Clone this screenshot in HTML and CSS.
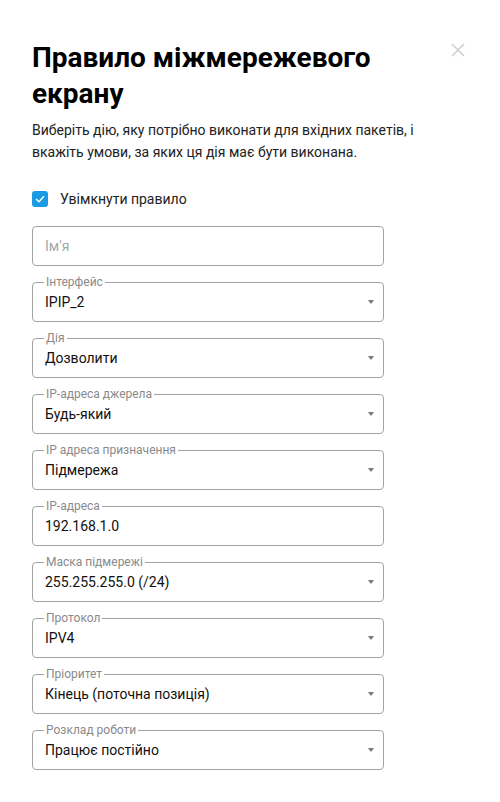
FILE: index.html
```html
<!DOCTYPE html>
<html lang="uk">
<head>
  <meta charset="UTF-8">
  <meta name="viewport" content="width=device-width, initial-scale=1">
  <title>Правило міжмережевого екрану</title>
  <link rel="stylesheet" href="styles.css">
</head>
<body>

  <!-- DIALOG -->
  <div class="dialog">
    <button class="close-btn" aria-label="Закрити">
      <svg width="14" height="14" viewBox="0 0 14 14">
        <path d="M1 1 L13 13 M13 1 L1 13" stroke="#cfcfcf" stroke-width="1.6" fill="none"/>
      </svg>
    </button>

    <h1 class="title">Правило міжмережевого екрану</h1>
    <p class="subtitle">Виберіть дію, яку потрібно виконати для вхідних пакетів, і вкажіть умови, за яких ця дія має бути виконана.</p>

    <label class="check-row">
      <span class="check-box">
        <svg width="10" height="8" viewBox="0 0 10 8">
          <path d="M1 4 L4 6.8 L9 1.2" stroke="#fff" stroke-width="1.4" fill="none"/>
        </svg>
      </span>
      Увімкнути правило
    </label>

    <!-- FORM -->
    <div class="form">
      <div class="field">
        <span class="placeholder">Ім'я</span>
      </div>

      <div class="field select">
        <span class="field-label">Інтерфейс</span>
        <span class="value">IPIP_2</span>
        <span class="arrow"></span>
      </div>

      <div class="field select">
        <span class="field-label">Дія</span>
        <span class="value">Дозволити</span>
        <span class="arrow"></span>
      </div>

      <div class="field select">
        <span class="field-label">IP-адреса джерела</span>
        <span class="value">Будь-який</span>
        <span class="arrow"></span>
      </div>

      <div class="field select">
        <span class="field-label">IP адреса призначення</span>
        <span class="value">Підмережа</span>
        <span class="arrow"></span>
      </div>

      <div class="field">
        <span class="field-label">IP-адреса</span>
        <span class="value">192.168.1.0</span>
      </div>

      <div class="field select">
        <span class="field-label">Маска підмережі</span>
        <span class="value">255.255.255.0 (/24)</span>
        <span class="arrow"></span>
      </div>

      <div class="field select">
        <span class="field-label">Протокол</span>
        <span class="value">IPV4</span>
        <span class="arrow"></span>
      </div>

      <div class="field select">
        <span class="field-label">Пріоритет</span>
        <span class="value">Кінець (поточна позиція)</span>
        <span class="arrow"></span>
      </div>

      <div class="field select">
        <span class="field-label">Розклад роботи</span>
        <span class="value">Працює постійно</span>
        <span class="arrow"></span>
      </div>
    </div>
  </div>

</body>
</html>
```

FILE: styles.css
```css
/* RESET */
* {
  margin: 0;
  padding: 0;
  box-sizing: border-box;
}

body, html {
  font-family: Roboto, "Liberation Sans", Arial, sans-serif;
  color: #1c1c1c;
  background-color: #fff;
}

/* DIALOG */
.dialog {
  position: relative;
  width: 500px;
  padding: 40px 116px 40px 32px;
}

.close-btn {
  position: absolute;
  top: 43px;
  left: 451px;
  background: none;
  border: none;
  cursor: pointer;
  line-height: 0;
}

.title {
  font-size: 28px;
  line-height: 36px;
  font-weight: 700;
  color: #000;
  margin-right: -40px;
}

.subtitle {
  margin-top: 7px;
  font-size: 14px;
  line-height: 22px;
  color: #222;
  margin-right: -60px;
}

/* CHECKBOX */
.check-row {
  display: flex;
  align-items: center;
  gap: 12px;
  margin-top: 28px;
  font-size: 14px;
  line-height: 16px;
  color: #222;
  cursor: pointer;
}

.check-box {
  width: 16px;
  height: 16px;
  border-radius: 3px;
  background-color: #1b9be4;
  display: flex;
  align-items: center;
  justify-content: center;
}

/* FORM */
.form {
  display: flex;
  flex-direction: column;
  gap: 16px;
  margin-top: 19px;
}

.field {
  position: relative;
  height: 40px;
  border: 1px solid #a3a3a3;
  border-radius: 4px;
  display: flex;
  align-items: center;
  padding: 0 12px;
  font-size: 14px;
}

.field-label {
  position: absolute;
  top: -8px;
  left: 11px;
  padding: 0 2px;
  background-color: #fff;
  font-size: 12px;
  line-height: 14px;
  color: #8a8a8a;
}

.placeholder {
  color: #a8a8a8;
}

.value {
  flex: 1;
  color: #111;
}

/* Pfeil für Auswahlfelder */
.arrow {
  width: 0;
  height: 0;
  border-left: 3.5px solid transparent;
  border-right: 3.5px solid transparent;
  border-top: 4px solid #777;
  margin-right: -3px;
}
```
